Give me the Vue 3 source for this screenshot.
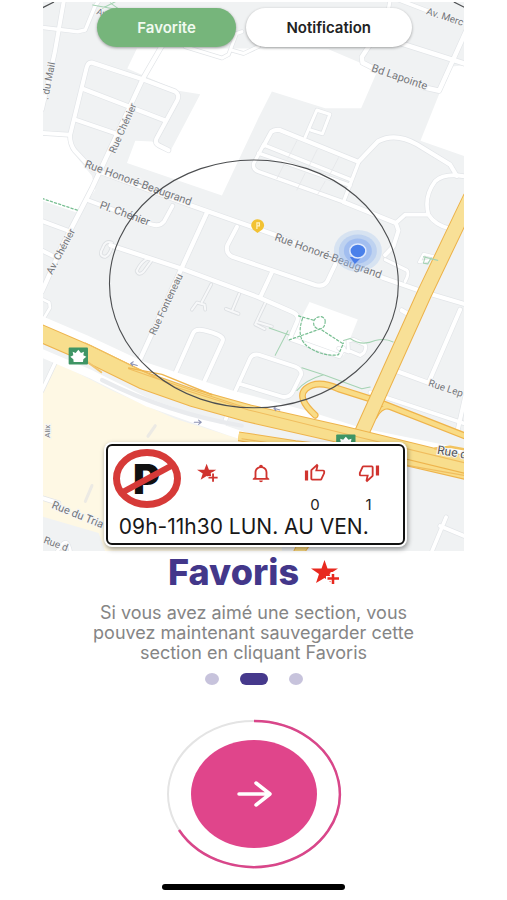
<script setup>
  import { ref } from "vue";

  const activeTab = ref('favorite');
  const slide = ref(1);

  // Land shown in white on the map (buildings, parks)
  const blocks = [
      'M285 138L580 138L700 138L860 140L955 178L1005 205L958 308L850 308L690 260L650 335L540 556L255 463L280 400L330 402L385 430L475 268L410 258L256 195Z',
      'M1272 185L1225 190L1136 400L1272 445Z',
      'M0 385L82 385L86 425L150 500L160 540L110 606L0 570Z',
      'M803 858L948 908L925 962L906 1010L860 1010L745 965Z',
  ];

  const roads = [
      { d: 'M66 0L38 150L0 310', w: 12 },
      { d: 'M0 78L107 90L130 85L158 20L172 0', w: 10 },
      { d: 'M360 130L302 225L150 535L60 700L0 828', w: 13 },
      { d: 'M302 225L150 178Q138 176 134 192L84 385Q84 410 98 428L150 480L450 585L700 668L1025 790L1146 830', w: 12 },
      { d: 'M302 225L400 260Q414 270 406 285L343 395Q338 407 352 414L380 427', w: 12 },
      { d: 'M122 252L368 342', w: 12 },
      { d: 'M100 340L230 382M0 378L82 383', w: 11 },
      { d: 'M140 570L310 630Q350 650 366 630L392 585', w: 11 },
      { d: 'M0 628L85 658M0 712L32 727', w: 11 },
      { d: 'M495 605L420 760L295 1020', w: 13 },
      { d: 'M205 697L420 764L650 845L750 886Q776 896 764 918L744 962L892 1012L905 990', w: 12 },
      { d: 'M585 645L556 698Q550 720 572 730L820 810Q844 817 856 800L880 752', w: 12 },
      { d: 'M692 770L655 845', w: 12 },
      { d: 'M395 1072L453 948Q460 930 500 942Q550 955 542 970L482 1095', w: 12 },
      { d: 'M545 1210L580 1112L625 1018Q632 1005 650 1008L760 1042Q780 1050 778 1065L750 1118Q740 1130 722 1128L590 1090', w: 11 },
      { d: 'M890 990L920 1000M918 970L935 965L970 980Q975 988 966 1003L955 1010L920 996Z', w: 9 },
      { d: 'M360 132L382 112M430 133L540 165L560 155L584 95L600 90M568 142L605 152L650 132', w: 9 },
      { d: 'M982 130L960 162L962 178L1000 196M1145 248L1192 258L1272 90M1080 124L1272 182', w: 13 },
      { d: 'M1045 0L1040 25M1072 0L1160 32', w: 10 },
      { d: 'M790 390L825 313L864 325L842 380L808 370', w: 9 },
      { d: 'M665 415L688 375Q698 367 715 370L950 460L1008 402Q1060 375 1125 410L1225 468L1245 500', w: 12 },
      { d: 'M665 412L930 512M650 435L925 527M665 412L635 465Q632 482 650 488L905 574L950 462', w: 10 },
      { d: 'M905 574L1062 634L1070 655L1055 700L1030 725', w: 12 },
      { d: 'M1062 634L1090 610L1160 610Q1145 560 1180 515Q1210 490 1272 502M1160 610Q1180 640 1225 650', w: 11 },
      { d: 'M1030 738L1095 768Q1104 776 1090 800', w: 9 },
      { d: 'M1146 830L1272 865M1255 880L1160 1088L1062 1054M1272 1120L1246 1230M1080 882L1098 892', w: 12 },
      { d: 'M0 850L22 860L24 875L5 905', w: 8 },
      { d: 'M45 1020L0 1110', w: 10 },
      { d: 'M1213 1470L1170 1568M1195 1495L1272 1525', w: 11 },
      { d: 'M0 1415L50 1430', w: 11 },
      { d: 'M45 1568L62 1545Q78 1530 86 1568', w: 8 },
      { d: 'M1160 740L1132 745L1145 722L1190 732', w: 7 },
      { d: 'M985 1115L1272 1205', w: 10 },
  ];

  // Thin driveways inside the blocks
  const lanes = [
      'M508 808L480 858M450 880L465 860L488 866L490 880',
      'M592 835L570 885M552 878L590 892',
      'M670 862L640 922L668 935M645 915L690 928',
      'M210 690Q190 682 182 705Q168 728 190 730Q204 724 210 700',
      'M320 734Q300 740 284 770Q290 785 305 772L328 742',
  ];

  const lots = 'M765 400L738 450M826 425L800 475M890 448L862 500M725 470L705 508M790 492L765 540M850 515L828 552';

  const paths = [
      'M682 932L742 952M738 940L700 1010',
      'M780 1045L845 1065Q790 1080 765 1110M845 1065L960 1105L985 1100',
      'M905 968L925 962Q960 985 1000 968Q1030 960 1054 972',
      'M152 14L242 30M180 24L222 4M205 8L234 28',
      'M1145 730L1188 740M1150 730L1145 748L1158 750L1168 733',
  ];

  const dashed = [
      'M0 564L108 598',
      'M770 898L815 910M742 966L835 935L905 978M782 905Q760 965 805 990Q850 1015 890 1008L905 975',
      'M850 912Q850 935 830 935Q812 930 816 912Q822 900 838 900Q850 904 850 912',
  ];

  const labels = [
      { text: '. du Mail', x: 6, y: 100, angle: -79, size: 10 },
      { text: 'Rue Chénier', x: 73, y: 154, angle: -66, size: 10 },
      { text: 'Av. Chénier', x: 10, y: 275, angle: -62, size: 10 },
      { text: 'Rue Honoré-Beaugrand', x: 42, y: 167, angle: 20, size: 11 },
      { text: 'Pl. Chénier', x: 57, y: 208, angle: 20, size: 11 },
      { text: 'Rue Fonteneau', x: 113, y: 336, angle: -65, size: 10 },
      { text: 'Rue Honoré-Beaugrand', x: 232, y: 240, angle: 20, size: 11 },
      { text: 'Bd Lapointe', x: 329, y: 71, angle: 19, size: 11 },
      { text: 'Av. Merc', x: 384, y: 14, angle: 18, size: 10 },
      { text: 'Rue Lep', x: 386, y: 386, angle: 18, size: 10 },
      { text: 'Rue du Tria', x: 9, y: 508, angle: 22, size: 11 },
      { text: 'Rue d', x: 1, y: 543, angle: 20, size: 10 },
  ];

  const actions = ref([
      { id: 'star', label: 'Ajouter aux favoris', count: null },
      { id: 'bell', label: 'Notification', count: null },
      { id: 'up', label: "J'aime", count: 0 },
      { id: 'down', label: "Je n'aime pas", count: 1 },
  ]);

  const nextSlide = () => {
    slide.value = (slide.value + 1) % 3;
  };
</script>


<template>
  <main class="page">
    <section class="map">
      <svg class="map-canvas" viewBox="1 2 422 549" aria-hidden="true">
        <rect x="0" y="0" width="424" height="552" fill="#f0f2f3" />
        <g transform="scale(.3333 .352)" fill="none" stroke-linejoin="round" stroke-linecap="round">
          <path v-for="d in blocks" :key="d" :d="d" fill="#fff" />
          <path d="M45 1030L210 1110L400 1190L600 1250L720 1280V1568H190L170 1515L0 1468V1110Z" fill="#fef8e4" />
          <path d="M340 1210L318 1240M150 1380L130 1425" stroke="#eceae4" stroke-width="9" />

          <path v-for="r in roads" :key="'c' + r.d" :d="r.d" stroke="#e2e5e8" :stroke-width="r.w + 4" />
          <path v-for="d in lanes" :key="'c' + d" :d="d" stroke="#dcdfe2" stroke-width="11" />
          <path v-for="d in lanes" :key="d" :d="d" stroke="#f7f8f9" stroke-width="6" />
          <path v-for="r in roads" :key="r.d" :d="r.d" stroke="#fff" :stroke-width="r.w" />
          <path :d="lots" stroke="#e3e5e8" stroke-width="2" />

          <!-- service roads along the highway -->
          <path d="M-10 908L130 965L300 1040L560 1120L800 1182L960 1230L1272 1290" stroke="#fff" stroke-width="26" />
          <path d="M-10 1000L150 1065L320 1145L560 1225L640 1250" stroke="#fff" stroke-width="24" />
          <path d="M180 1080Q380 1175 600 1210" stroke="#e9ebee" stroke-width="12" />

          <!-- ramps -->
          <path d="M820 1180Q762 1130 792 1105Q825 1078 890 1105L990 1135L1272 1240" stroke="#efb44b" stroke-width="20" />
          <path d="M1000 1185Q1020 1145 1060 1160" stroke="#efb44b" stroke-width="14" />
          <path d="M820 1180Q762 1130 792 1105Q825 1078 890 1105L990 1135L1272 1240" stroke="#f9dc87" stroke-width="13" />
          <path d="M1000 1185Q1020 1145 1060 1160" stroke="#f9dc87" stroke-width="8" />

          <!-- boulevard -->
          <path d="M1284 565L1150 830L955 1240" stroke="#ecb24a" stroke-width="46" />
          <path d="M1284 565L1150 830L955 1240" stroke="#f8e097" stroke-width="40" />

          <!-- highway -->
          <g stroke-linecap="butt">
            <path d="M590 1240L760 1265L1000 1290L1280 1352" stroke="#eeb44d" stroke-width="28" />
            <path d="M590 1240L760 1265L1000 1290L1280 1352" stroke="#f9dc88" stroke-width="22" />
          </g>
          <path d="M-10 945L140 1006L300 1080L450 1130L620 1175L900 1235L1290 1325" stroke="#eeb44d" stroke-width="52" />
          <path d="M-10 945L140 1006L300 1080L450 1130L620 1175L900 1235L1290 1325" stroke="#f8de8d" stroke-width="46" />
          <path d="M130 975L250 1030L400 1100L620 1165L940 1240L1272 1316M260 1048L350 1078L610 1158M600 1247L900 1290L1272 1352" stroke="#f0bd5e" stroke-width="3" />
          <path d="M260 1046L360 1064L510 1122" stroke="#efb650" stroke-width="4" />
          <path d="M138 1030L178 1058" stroke="#f1c46e" stroke-width="6" />
          <path d="M1180 1275L1225 1270L1272 1278" stroke="#f2c35f" stroke-width="7" />
          <path d="M755 1568L770 1540H810L790 1568" fill="#f7d77f" stroke="#eeb44d" stroke-width="3" />

          <path v-for="d in paths" :key="d" :d="d" stroke="#a5d3b3" stroke-width="3" />
          <path v-for="d in dashed" :key="d" :d="d" stroke="#79bf93" stroke-width="3.5" stroke-dasharray="7 6" />

          <!-- direction arrows -->
          <path d="M286 1039L266 1033M274 1028L266 1033L272 1040M714 1165L696 1160M704 1155L696 1160L702 1167M457 1200H477M470 1194L478 1200L470 1206" stroke="#8d93b4" stroke-width="3" />

          <!-- highway shields -->
          <g v-for="pos in ['80 988', '883 1235']" :key="pos" :transform="`translate(${pos})`">
            <rect width="58" height="48" rx="3" fill="#3f9565" />
            <path d="M29 6L37 15L46 12L44 22L53 26L44 33L43 41H15L14 33L5 26L14 22L12 12L21 15Z" fill="#fff" />
          </g>
        </g>

        <text
          v-for="l in labels"
          :key="l.text + l.x"
          class="street"
          :font-size="l.size"
          :transform="`translate(${l.x} ${l.y}) rotate(${l.angle})`"
        >{{ l.text }}</text>
        <text class="street" font-size="8" transform="translate(4 438) rotate(-90) translate(0 4)">Alix</text>
        <text class="street route" font-size="12" transform="translate(395 454) rotate(9)">Rue</text>
        <text class="street route" font-size="12" transform="translate(418 458) rotate(9)">d</text>
        <text class="street" font-size="9" transform="translate(54 14) rotate(20)">Av</text>

        <!-- parking pin -->
        <path d="M215.500 233L211 229.500A6.500 6 0 1 1 220.500 229.500Z" fill="#f2c233" />
        <path d="M215 229V223H217.500V226H215" fill="none" stroke="#fff3c4" stroke-width="1.200" />

        <ellipse cx="212" cy="284" rx="144.500" ry="124" fill="none" stroke="#4c4e50" stroke-width="1.100" />
        <path d="M0 8L12 2M412 2L424 8" stroke="#4c4e50" stroke-width="1.200" />

        <!-- current position -->
        <ellipse cx="316" cy="251" rx="24" ry="21" fill="#9fc0ee" fill-opacity=".3" />
        <ellipse cx="316" cy="251" rx="19" ry="16.500" fill="#8fb2ee" fill-opacity=".35" />
        <ellipse cx="316" cy="251" rx="14" ry="12.500" fill="#6f9cf0" fill-opacity=".35" />
        <path d="M308 257L313 264L320 257Z" fill="#4a7de8" />
        <ellipse cx="316" cy="251" rx="8" ry="7" fill="#4a80ea" stroke="#dfe9fc" stroke-width="1.500" />
      </svg>

      <nav class="tabs">
        <button type="button" class="tab" :class="{ active: activeTab === 'favorite' }" @click="activeTab = 'favorite'">Favorite</button>
        <button type="button" class="tab wide" :class="{ active: activeTab === 'notification' }" @click="activeTab = 'notification'">Notification</button>
      </nav>

      <article class="card">
        <div class="card-top">
          <svg class="sign" viewBox="0 0 68 59" role="img" aria-label="Stationnement interdit">
            <text x="20" y="45" class="sign-letter">P</text>
            <ellipse cx="34" cy="29.500" rx="30.500" ry="26" fill="none" stroke="#d63a38" stroke-width="7" />
            <path d="M10 43L58 17" stroke="#d63a38" stroke-width="6" />
          </svg>
          <div v-for="a in actions" :key="a.id" class="action">
            <button type="button" class="icon-button" :aria-label="a.label">
              <svg v-if="a.id === 'star'" class="icon" viewBox="0 0 24 24" preserveAspectRatio="none">
                <path d="M10.500 1L13 8H21L14.800 12.500L17 20L10.500 15.500L4 20L6.300 12.500L0 8H8Z" />
                <path d="M17.500 11.500V23.500M11.500 17.500H23.500" stroke="#fff" stroke-width="4" />
                <path d="M17.500 12.500V22.500M12.500 17.500H22.500" stroke="#d0342f" stroke-width="2" />
              </svg>
              <svg v-else-if="a.id === 'bell'" class="icon" viewBox="0 0 24 24" preserveAspectRatio="none">
                <path d="M10 21h4c0 1.100-.9 2-2 2s-2-.9-2-2m11-2v1H3v-1l2-2v-6c0-3.100 2.030-5.830 5-6.710V4a2 2 0 0 1 4 0v.29c2.970.88 5 3.610 5 6.710v6l2 2m-4-8a5 5 0 0 0-10 0v7h10v-7z" />
              </svg>
              <svg v-else class="icon" :class="{ flipped: a.id === 'down' }" viewBox="0 0 24 24" preserveAspectRatio="none">
                <path d="M4.500 9v12H1V9h3.500M9 21a2 2 0 0 1-2-2V9c0-.55.22-1.050.59-1.410L14.170 1l1.060 1.060c.27.27.44.64.44 1.050l-.03.32L14.690 8H21a2 2 0 0 1 2 2v2c0 .26-.05.5-.14.73l-3.020 7.050C19.540 20.500 18.830 21 18 21H9m0-2h9.030L21 12v-2h-8.790l1.130-5.320L9 9.030V19z" />
              </svg>
            </button>
            <span v-if="a.count !== null" class="count">{{ a.count }}</span>
          </div>
        </div>
        <p class="schedule">09h-11h30 LUN. AU VEN.</p>
      </article>
    </section>

    <h1 class="title">
      Favoris
      <svg class="title-star" viewBox="0 0 28 24" aria-hidden="true">
        <path d="M13.500 0L16.500 8.500H27L18.500 14L21 23L13.500 18L5 23L8 14L0 8.500H10.500Z" fill="#e8291f" />
        <path d="M22 12V26M15 18.500H29" stroke="#fff" stroke-width="5" />
        <path d="M22 14V24M16.500 18.500H28" stroke="#e8291f" stroke-width="2.500" />
      </svg>
    </h1>

    <p class="description">Si vous avez aimé une section, vous pouvez maintenant sauvegarder cette section en cliquant Favoris</p>

    <div class="dots">
      <button
        v-for="n in 3"
        :key="n"
        type="button"
        class="dot"
        :class="{ current: slide === n - 1 }"
        :aria-label="`Page ${n}`"
        @click="slide = n - 1"
      ></button>
    </div>

    <button type="button" class="next" aria-label="Suivant" @click="nextSlide">
      <svg viewBox="0 0 176 150">
        <ellipse cx="88" cy="75" rx="86" ry="73" fill="none" stroke="#e4e4e4" stroke-width="2" />
        <path d="M88 2A86 73 0 1 1 13 111" fill="none" stroke="#d9468a" stroke-width="2.500" />
        <ellipse cx="88" cy="75" rx="63" ry="54" fill="#e0458b" />
        <path d="M73 75H103M90 64L104 75L90 86" fill="none" stroke="#fff" stroke-width="3.500" stroke-linecap="round" stroke-linejoin="round" />
      </svg>
    </button>

    <div class="home-bar"></div>
  </main>
</template>

<style>
body {
    margin: 0;
    background-color: #fff;
}
</style>

<style scoped>

.page {
    display: flex;
    flex-direction: column;
    align-items: center;
    padding-top: 2px;
    font-family: Inter, "Liberation Sans", sans-serif;
}

.map {
    position: relative;
    width: 83.2%;
}

.map-canvas {
    display: block;
    width: 100%;
}

.street {
    fill: #74777b;
    font-family: Roboto, sans-serif;
    stroke: #f4f5f6;
    stroke-width: 2px;
    paint-order: stroke;
}

.route {
    fill: #505356;
}

.tabs {
    position: absolute;
    top: 6px;
    left: 13%;
    right: 12.5%;
    display: flex;
    gap: 10px;
}

.tab {
    flex: 5;
    height: 39px;
    padding: 0;
    border: none;
    border-radius: 20px;
    background-color: #fff;
    box-shadow: 0 1px 3px rgba(0, 0, 0, 0.35);
    color: #222;
    font-family: inherit;
    font-size: 15px;
    font-weight: 600;
}

.tab.wide {
    flex: 6;
}

.tab.active {
    background-color: #76b57b;
    color: #f1faf0;
}

.card {
    position: absolute;
    left: 15%;
    right: 14%;
    bottom: 6px;
    box-sizing: border-box;
    padding: 3px 8px 3px 5px;
    border: 2px solid #111;
    border-radius: 6px;
    background-color: #fff;
    box-shadow: 0 0 0 2px #fff, 1px 2px 5px 2px rgba(0, 0, 0, 0.4);
}

.card-top {
    display: grid;
    grid-template-columns: 68px repeat(4, 1fr);
}

.sign {
    width: 68px;
    height: 59px;
}

.sign-letter {
    font-size: 41px;
    font-weight: 900;
    fill: #111;
}

.action {
    display: flex;
    flex-direction: column;
    align-items: center;
    padding-top: 14px;
}

.icon-button {
    padding: 0;
    border: none;
    background: none;
    line-height: 0;
}

.icon {
    width: 22px;
    height: 20px;
    fill: #d0342f;
}

.flipped {
    transform: rotate(180deg);
}

.count {
    margin-top: 13px;
    color: #222;
    font-size: 15px;
    line-height: 18px;
}

.schedule {
    margin: 0;
    padding: 0 6px;
    color: #181818;
    font-size: 21px;
    line-height: 26px;
    white-space: nowrap;
}

.title {
    display: flex;
    align-items: center;
    gap: 12px;
    margin: 0;
    color: #43378a;
    font-size: 36px;
    font-weight: 800;
    line-height: 42px;
}

.title-star {
    width: 28px;
    height: 24px;
}

.description {
    max-width: 344px;
    margin: 10px 0 0;
    color: #858585;
    font-size: 18px;
    line-height: 20px;
    text-align: center;
}

.dots {
    display: flex;
    gap: 21px;
    margin-top: 10px;
}

.dot {
    width: 14px;
    height: 12px;
    padding: 0;
    border: none;
    border-radius: 50%;
    background-color: #c7c3dc;
}

.dot.current {
    width: 28px;
    border-radius: 6px;
    background-color: #46398c;
}

.next {
    width: 176px;
    margin-top: 34px;
    padding: 0;
    border: none;
    background: none;
}

.next svg {
    display: block;
    width: 100%;
}

.home-bar {
    width: 36%;
    height: 6px;
    margin-top: 15px;
    border-radius: 3px;
    background-color: #000;
}

</style>
